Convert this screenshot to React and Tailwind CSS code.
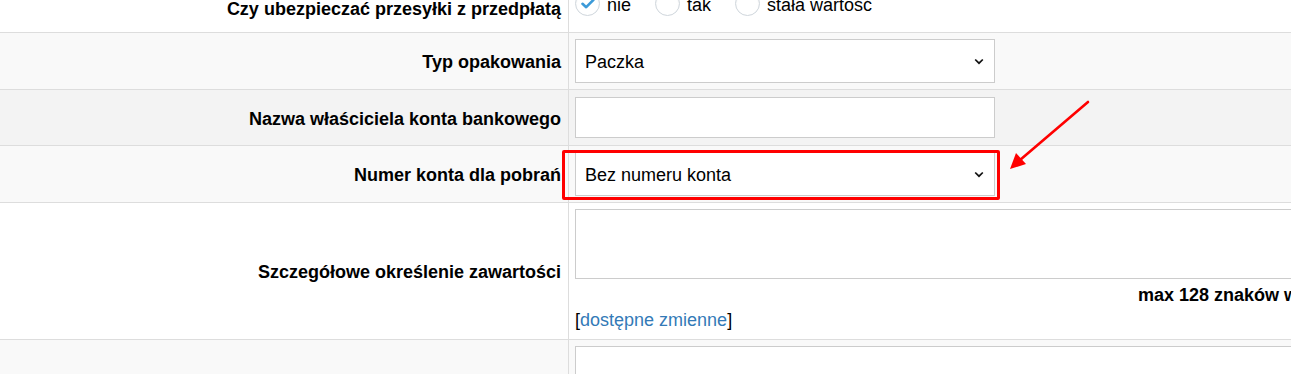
import React from "react";

const Radio = ({ checked, label }) => (
  <label className="flex items-center gap-[7px] mr-[24px]">
    <span className="relative flex h-[25px] w-[25px] items-center justify-center rounded-full border border-[#cfd6dc] bg-white shadow-[inset_0_1px_2px_rgba(0,0,0,0.06)]">
      {checked && (
        <svg width="14" height="11" viewBox="0 0 14 11" fill="none">
          <path d="M1.5 5.8 L5.2 9.2 L12.5 1.8" stroke="#3c9ad8" strokeWidth="2.6" strokeLinecap="round" strokeLinejoin="round" />
        </svg>
      )}
    </span>
    <span className="pt-[3px]">{label}</span>
  </label>
);

const FakeSelect = ({ value }) => (
  <div className="flex h-[44px] w-[420px] items-center justify-between border border-[#ccc] bg-white pl-[9px] pr-[10px]">
    <span className="pt-[2px]">{value}</span>
    <svg width="10" height="7" viewBox="0 0 10 7" fill="none">
      <path d="M1.2 1.5 L5 5.2 L8.8 1.5" stroke="#111" strokeWidth="1.7" />
    </svg>
  </div>
);

const Row = ({ label, bg, height, children, alignTop }) => (
  <div className={`flex border-b border-[#ddd] ${bg} ${height}`}>
    <div className="flex w-[569px] shrink-0 items-center justify-end border-r border-[#ddd] pr-[7px] pt-[2px] font-bold text-right">
      {label}
    </div>
    <div className={`flex flex-1 pl-[6px] ${alignTop ? "flex-col pt-[6px]" : "items-center"}`}>
      {children}
    </div>
  </div>
);

export default function App() {
  return (
    <div className="relative h-[374px] w-full overflow-hidden bg-white text-[18px] leading-[24px] text-black font-['Liberation_Sans',Arial,sans-serif]">
      <div className="-mt-[17px] w-[1700px]">
        <Row label="Czy ubezpieczać przesyłki z przedpłatą" bg="bg-white" height="h-[50px]">
          <div className="-mt-[8px] flex items-center">
            <Radio checked label="nie" />
            <Radio label="tak" />
            <Radio label="stała wartość" />
          </div>
        </Row>
        <Row label="Typ opakowania" bg="bg-[#f9f9f9]" height="h-[57px]">
          <FakeSelect value="Paczka" />
        </Row>
        <Row label="Nazwa właściciela konta bankowego" bg="bg-[#f3f3f3]" height="h-[56px]">
          <div className="h-[41px] w-[420px] border border-[#ccc] bg-white" />
        </Row>
        <Row label="Numer konta dla pobrań" bg="bg-[#f9f9f9]" height="h-[57px]">
          <FakeSelect value="Bez numeru konta" />
        </Row>
        <Row label="Szczegółowe określenie zawartości" bg="bg-white" height="h-[137px]" alignTop>
          <div className="h-[70px] w-[1000px] border border-[#ccc] bg-white" />
          <div className="ml-[563px] mt-[4px] whitespace-nowrap font-bold">max 128 znaków włącznie ze spacjami</div>
          <div className="mt-[1px]">
            [<span className="text-[#337ab7]">dostępne zmienne</span>]
          </div>
        </Row>
        <Row label="" bg="bg-[#f9f9f9]" height="h-[80px]" alignTop>
          <div className="h-[70px] w-[1000px] border border-[#ccc] bg-white" />
        </Row>
      </div>

      {/* annotation overlay */}
      <div className="absolute left-[562px] top-[150px] h-[50px] w-[438px] rounded-[2px] border-[3px] border-[#ff0000]" />
      <svg className="absolute left-0 top-0" width="1291" height="374" viewBox="0 0 1291 374" fill="none">
        <line x1="1088" y1="102" x2="1020" y2="160" stroke="#ff0000" strokeWidth="2.6" strokeLinecap="round" />
        <path d="M1010 169 L1016 153 L1026 164 Z" fill="#ff0000" />
      </svg>
    </div>
  );
}
